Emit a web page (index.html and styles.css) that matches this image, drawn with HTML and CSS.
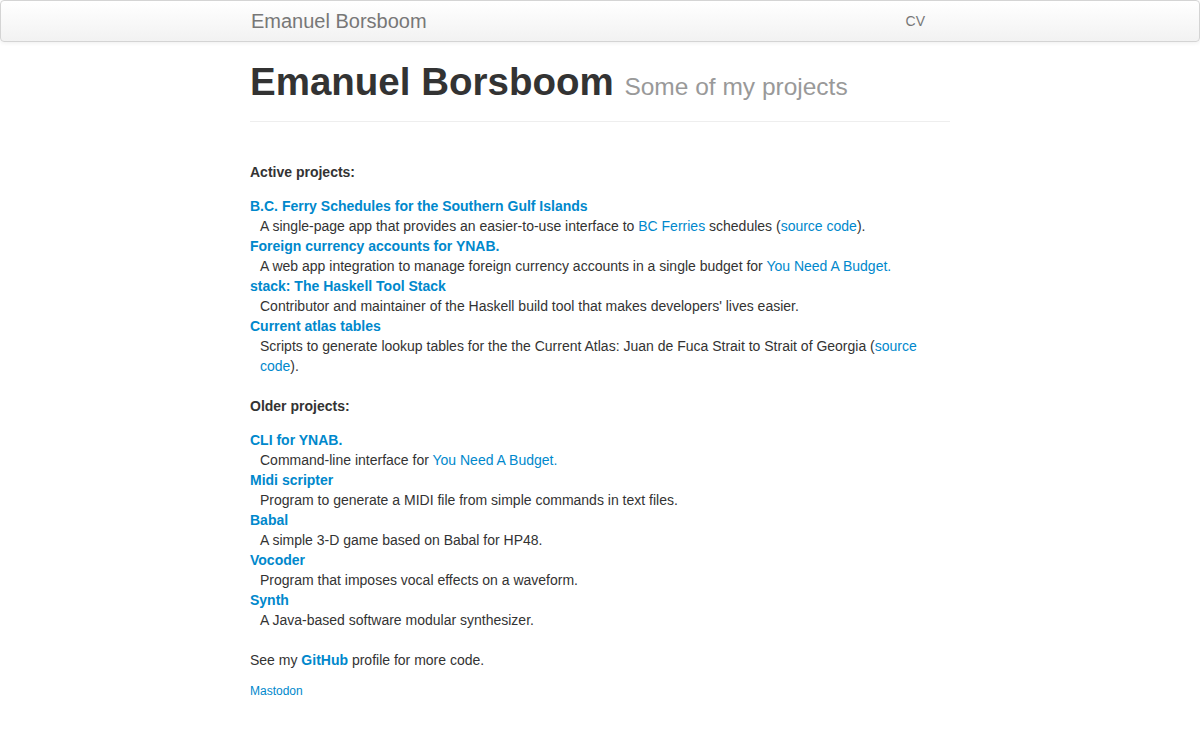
FILE: index.html
```html
<!DOCTYPE html>
<html>
<head>
<meta charset="utf-8">
<title>Emanuel Borsboom</title>
<link rel="stylesheet" href="styles.css">
</head>
<body>
<div class="navbar">
  <div class="navbar-inner">
    <a class="brand" href="#">Emanuel Borsboom</a>
    <a class="nav-link" href="#">CV</a>
  </div>
</div>
<div class="container">
  <div class="page-header">
    <h1>Emanuel Borsboom <small>Some of my projects</small></h1>
  </div>
  <h5 class="section-title">Active projects:</h5>
  <dl class="projects">
    <dt><a href="#">B.C. Ferry Schedules for the Southern Gulf Islands</a></dt>
    <dd>A single-page app that provides an easier-to-use interface to <a href="#">BC Ferries</a> schedules (<a href="#">source code</a>).</dd>
    <dt><a href="#">Foreign currency accounts for YNAB.</a></dt>
    <dd>A web app integration to manage foreign currency accounts in a single budget for <a href="#">You Need A Budget.</a></dd>
    <dt><a href="#">stack: The Haskell Tool Stack</a></dt>
    <dd>Contributor and maintainer of the Haskell build tool that makes developers' lives easier.</dd>
    <dt><a href="#">Current atlas tables</a></dt>
    <dd>Scripts to generate lookup tables for the the Current Atlas: Juan de Fuca Strait to Strait of Georgia (<a href="#">source code</a>).</dd>
  </dl>
  <h5 class="section-title">Older projects:</h5>
  <dl class="projects">
    <dt><a href="#">CLI for YNAB.</a></dt>
    <dd>Command-line interface for <a href="#">You Need A Budget.</a></dd>
    <dt><a href="#">Midi scripter</a></dt>
    <dd>Program to generate a MIDI file from simple commands in text files.</dd>
    <dt><a href="#">Babal</a></dt>
    <dd>A simple 3-D game based on Babal for HP48.</dd>
    <dt><a href="#">Vocoder</a></dt>
    <dd>Program that imposes vocal effects on a waveform.</dd>
    <dt><a href="#">Synth</a></dt>
    <dd>A Java-based software modular synthesizer.</dd>
  </dl>
  <p class="more">See my <a class="strong" href="#">GitHub</a> profile for more code.</p>
  <p class="social"><a href="#">Mastodon</a></p>
</div>
</body>
</html>
```

FILE: styles.css
```css
html, body {
  margin: 0;
  padding: 0;
}
body {
  font-family: "Liberation Sans", Arial, Helvetica, sans-serif;
  font-size: 14px;
  line-height: 20px;
  color: #333;
  background: #fff;
}
a {
  color: #0088cc;
  text-decoration: none;
}
.navbar {
  margin-bottom: 20px;
}
.navbar-inner {
  height: 40px;
  display: flex;
  align-items: center;
  justify-content: space-between;
  padding: 0 calc((100% - 700px) / 2);
  background: linear-gradient(to bottom, #ffffff, #f2f2f2);
  border: 1px solid #d4d4d4;
  border-radius: 4px;
  box-shadow: 0 1px 4px rgba(0, 0, 0, 0.065);
}
.brand {
  font-size: 20px;
  line-height: 20px;
  color: #777;
}
.nav-link {
  color: #777;
  font-size: 14px;
  margin-right: 24px;
}
.container {
  width: 700px;
  margin: 0 auto;
}
.page-header {
  padding-bottom: 14px;
  border-bottom: 1px solid #eee;
}
h1 {
  margin: 0;
  font-size: 38.5px;
  line-height: 40px;
  font-weight: bold;
  color: #333;
}
h1 small {
  font-size: 24.5px;
  font-weight: normal;
  color: #999;
}
.section-title {
  margin: 40px 0 14px;
  font-size: 14px;
  line-height: 20px;
  font-weight: bold;
}
.projects + .section-title {
  margin-top: 20px;
}
.projects {
  margin: 0 0 20px;
}
.projects dt {
  font-weight: bold;
}
.projects dd {
  margin-left: 10px;
}
.more {
  margin: 0 0 11px;
}
.strong {
  font-weight: bold;
}
.social {
  margin: 0;
  font-size: 12px;
}
```
